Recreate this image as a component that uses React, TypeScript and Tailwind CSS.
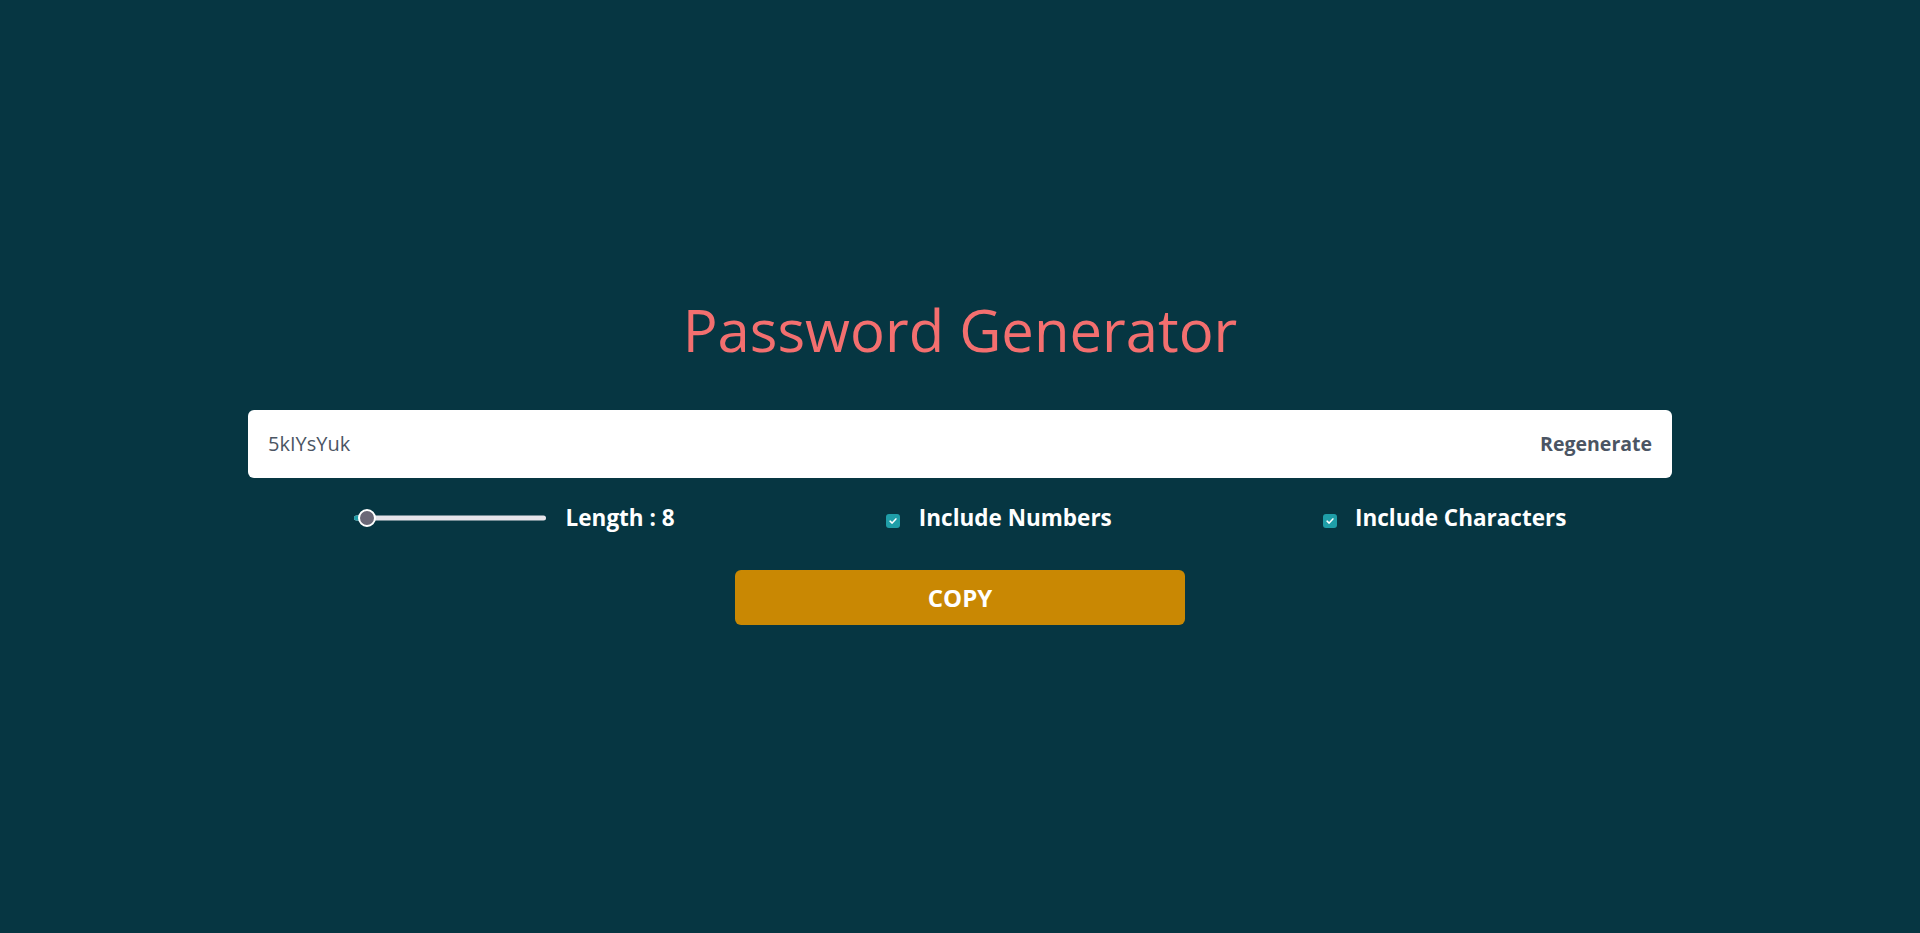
import { useState } from "react";

const CheckBox = () => (
  <span className="mt-[5px] flex h-[14px] w-[14px] items-center justify-center rounded-[3px] bg-[#1f9ea8]">
    <svg viewBox="0 0 12 12" className="h-[10px] w-[10px]" fill="none">
      <path d="M2.5 6.2 5 8.5 9.5 3.5" stroke="white" strokeWidth="1.8" strokeLinecap="round" strokeLinejoin="round" />
    </svg>
  </span>
);

const App = () => {
  const [password] = useState("5kIYsYuk");
  const [length] = useState(8);

  return (
    <div className="min-h-screen w-full bg-[#063642] flex flex-col items-center pt-[301px] font-['Open_Sans',sans-serif]">
      <h1 className="text-[58px] leading-none font-normal text-[#f36f6f]">Password Generator</h1>

      <div className="mt-[51px] w-[1424px] h-[68px] bg-white rounded-md flex items-center justify-between px-5">
        <span className="text-xl text-[#4b5563]">{password}</span>
        <button className="text-[19.5px] font-bold text-[#4b5563]">Regenerate</button>
      </div>

      <div className="mt-6 w-[1424px] h-8 flex items-center justify-around">
        <div className="flex items-center gap-[20px]">
          <div className="relative h-5 w-[192px]">
            <div className="absolute left-0 right-0 top-1/2 -translate-y-1/2 h-[5px] rounded-full bg-[#e6e4ea]" />
            <div className="absolute left-0 top-1/2 -translate-y-1/2 h-[5px] w-[8px] rounded-full bg-[#1f9ea8]" />
            <div className="absolute left-[4px] top-1/2 -translate-y-1/2 h-[18px] w-[18px] rounded-full bg-[#6b6877] border-2 border-white" />
          </div>
          <span className="text-[22.5px] font-bold text-white">Length : {length}</span>
        </div>

        <label className="flex items-center gap-[19px]">
          <CheckBox />
          <span className="text-[22.5px] font-bold text-white">Include Numbers</span>
        </label>

        <label className="flex items-center gap-[18px]">
          <CheckBox />
          <span className="text-[22.5px] font-bold text-white">Include Characters</span>
        </label>
      </div>

      <button className="mt-9 w-[450px] h-[55px] rounded-md bg-[#c98803] text-2xl font-bold text-white">
        COPY
      </button>
    </div>
  );
};

export default App;
